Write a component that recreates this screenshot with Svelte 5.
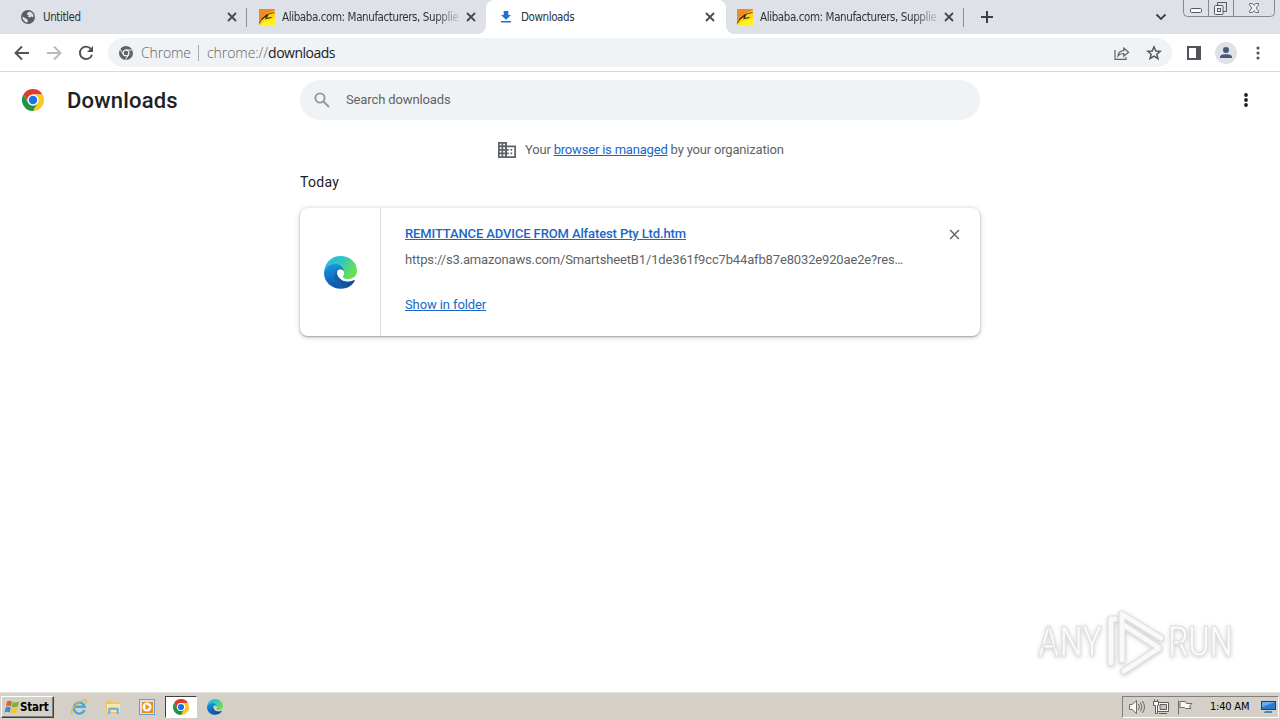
<script>
  const tabs = [
    { title: 'Untitled', icon: 'globe' },
    { title: 'Alibaba.com: Manufacturers, Supplie', icon: 'alibaba' },
    { title: 'Downloads', icon: 'download', active: true },
    { title: 'Alibaba.com: Manufacturers, Supplie', icon: 'alibaba' }
  ];
</script>

{#snippet chrome(size)}
  <svg width={size} height={size} viewBox="0 0 48 48">
    <circle cx="24" cy="24" r="24" fill="#fff" />
    <path d="M3.2 12A24 24 0 0 1 44.8 12L24 12A12 12 0 0 0 13.6 30Z" fill="#df3b30" />
    <path d="M44.8 12A24 24 0 0 1 24 48L34.4 30A12 12 0 0 0 24 12Z" fill="#fcc924" />
    <path d="M24 48A24 24 0 0 1 3.2 12L13.6 30A12 12 0 0 0 34.4 30Z" fill="#229342" />
    <circle cx="24" cy="24" r="12" fill="#fff" />
    <circle cx="24" cy="24" r="9.3" fill="#1a73e8" />
  </svg>
{/snippet}

{#snippet edge(size, id, gap)}
  <svg width={size} height={size} viewBox="0 0 256 256">
    <defs>
      <linearGradient id="{id}a" x1="0" y1="0" x2="1" y2="0.5"><stop offset="0" stop-color="#2cb4e8" /><stop offset=".5" stop-color="#2fc7c4" /><stop offset="1" stop-color="#6be050" /></linearGradient>
      <linearGradient id="{id}b" x1="0" y1="0" x2="0.3" y2="1"><stop offset="0" stop-color="#1b9de2" /><stop offset="1" stop-color="#0d55ac" /></linearGradient>
      <linearGradient id="{id}c" x1="0" y1="0" x2="1" y2="0"><stop offset="0" stop-color="#1263b5" /><stop offset="1" stop-color="#0c468c" /></linearGradient>
    </defs>
    <path d="M2 116C10 48 60 0 128 0C204 0 256 54 256 112C256 154 222 180 187 180C157 180 146 169 146 161C146 154 156 150 156 133C156 104 128 88 98 88C48 88 14 116 2 150Z" fill="url(#{id}a)" />
    <path d="M0 132C8 84 50 62 90 62C130 62 156 94 156 133C154 111 139 103 124 107C98 114 88 142 94 174C102 224 140 252 166 249C80 272 0 212 0 132Z" fill="url(#{id}b)" />
    <path d="M105 112C68 140 72 208 112 240C160 264 211 241 238 193C243 184 236 184 230 187C180 207 120 188 105 145Z" fill="url(#{id}c)" />
    <path d="M104 116C114 98 152 98 156 131C156 147 145 152 146 161C150 178 170 181 190 180C218 179 238 167 250 148L246 188L237 190C237 184 234 184 228 188C190 206 140 200 114 162C102 144 98 126 104 116Z" fill={gap} />
  </svg>
{/snippet}

{#snippet cross(size, weight)}
  <svg width={size} height={size} viewBox="0 0 10 10" fill="none" stroke="currentColor" stroke-width={weight}><path d="M1 1L9 9M9 1L1 9" /></svg>
{/snippet}

<div class="screen">
  <header class="strip">
    {#each tabs as tab, i}
      <div class="tab" class:active={tab.active} class:sep={i === 0 || i === 3}>
        <span class="fav">
          {#if tab.icon === 'globe'}
            <svg width="14" height="14" viewBox="0 0 14 14"><circle cx="7" cy="7" r="7" fill="#5a5e64" /><path d="M1.4 6.4L5 8.4C6.5 9 6 10 7 10.3L6.5 12.5C3.8 12.3 1.5 10 1.4 6.4ZM6 3.2L8.3 1.5C11 2.2 12.7 4.5 12.6 7.2L10.4 6.4L9 7.6L6.6 6.4L7.9 5.4L6.1 4.6Z" fill="#dee1e8" /></svg>
          {:else if tab.icon === 'alibaba'}
            <svg width="16" height="16" viewBox="0 0 16 16"><path fill="#ffd21c" d="M0 0h16v16H0z" /><path d="M0 0H16V1.500C10 3 4 6 0 13Z" fill="#f08a28" /><path d="M4 13L16 9V16H2Z" fill="#fff21a" /><path d="M0 14.500C2.500 9 7 4.500 15.500 3.500" fill="none" stroke="#8a4a10" stroke-width="1.100" /><path d="M2.500 10.500L8.800 5.500L7 9.500L12.500 8.500" fill="none" stroke="#3d2a10" stroke-width="1.200" /></svg>
          {:else}
            <svg width="12" height="14" viewBox="0 0 12 14" fill="#1a73d8"><path d="M3.7 1H8.3V5H11L6 9.7L1 5H3.7ZM1 11H11V12.5H1Z" /></svg>
          {/if}
        </span>
        <span class="title" class:fade={tab.icon === 'alibaba'}>{tab.title}</span>
        <span class="close">{@render cross(10, 1.8)}</span>
      </div>
    {/each}
    <svg class="plus" width="12" height="12" viewBox="0 0 12 12" stroke="#3c4043" stroke-width="2"><path d="M6 0V12M0 6H12" /></svg>
    <svg class="chev" width="12" height="8" viewBox="0 0 12 8" fill="none" stroke="#3c4043" stroke-width="1.8"><path d="M1.5 1.5L6 6L10.5 1.5" /></svg>
    <svg class="win" width="94" height="18" viewBox="0 0 94 18" fill="none" stroke="#85888f">
      <path d="M1.5 0V12.5Q1.5 16.5 5.5 16.5H88.5Q92.5 16.5 92.5 12.5V0M26.5 0V16.5M51.5 0V16.5" />
      <rect x="8.5" y="8.500" width="11" height="4" rx="1" stroke="#555960" fill="#f8f9fb" />
      <path d="M35.500 6V2.500H44.500V11.500H41" stroke="#555960" />
      <rect x="32.500" y="5.500" width="8.500" height="9" rx="1" stroke="#555960" fill="#f0f2f5" /><rect x="35.500" y="8.500" width="3" height="3" stroke="#555960" />
      <path d="M67.500 3.500H70.500L72 5.500L73.500 3.500H76.500V5L74 8L76.500 11V12.500H73.500L72 10.500L70.500 12.500H67.500V11L70 8L67.500 5Z" stroke="#6a6e75" fill="#f4f5f8" />
    </svg>
  </header>

  <nav class="toolbar">
    <svg class="nav" width="16" height="16" viewBox="0 0 16 16" fill="none" stroke="#505357" stroke-width="1.9"><path d="M15 8H2M8 1.500L1.500 8L8 14.500" /></svg>
    <svg class="nav" width="16" height="16" viewBox="0 0 16 16" fill="none" stroke="#b8babd" stroke-width="1.9"><path d="M1 8H14M8 1.500L14.500 8L8 14.500" /></svg>
    <svg class="nav" width="16" height="16" viewBox="0 0 16 16" fill="none" stroke="#505357" stroke-width="1.9"><path d="M13.200 4.300A6.200 6.200 0 1 0 14 9.800" /><path d="M15 1V7H9Z" fill="#505357" stroke="none" /></svg>
    <div class="omni">
      <svg width="14" height="14" viewBox="0 0 14 14"><circle cx="7" cy="7" r="7" fill="#5f6368" /><circle cx="7" cy="7" r="2.900" fill="none" stroke="#f0f3f6" stroke-width="1.200" /><path d="M7 4H13.500M9.600 8.500L6.600 13.800M4.400 8.500L1 3" stroke="#f0f3f6" stroke-width="1" /></svg>
      <span class="chip">Chrome</span>
      <span class="url">chrome://<b>downloads</b></span>
      <svg class="share" width="16" height="16" viewBox="0 0 16 16" fill="none" stroke="#5f6368" stroke-width="1.200"><path d="M1 5V14.400H12V12" /><path d="M4 11C4.500 7.500 6.500 5.800 9.800 5.700V3L14.600 7.200L9.800 11.200V8.500C7 8.500 5.300 9.300 4 11Z" /></svg>
      <svg width="16" height="16" viewBox="0 0 16 16" fill="none" stroke="#505357" stroke-width="1.400"><path d="M8 1.800L9.800 6L14.300 6.300L10.800 9.200L12 13.700L8 11.200L4 13.700L5.200 9.200L1.700 6.300L6.200 6Z" /></svg>
    </div>
    <svg class="panel" width="14" height="14" viewBox="0 0 14 14"><path fill-rule="evenodd" d="M0 0H14V14H0ZM2 2V12H9V2Z" fill="#505357" /></svg>
    <svg class="user" width="22" height="22" viewBox="0 0 22 22"><circle cx="11" cy="11" r="11" fill="#dee1e6" /><circle cx="11" cy="8" r="3" fill="#49577a" /><path d="M5 16V14.700C5 11.400 17 11.400 17 14.700V16Z" fill="#49577a" /></svg>
    <svg class="more" width="4" height="14" viewBox="0 0 4 14" fill="#505357"><circle cx="2" cy="2" r="1.550" /><circle cx="2" cy="7" r="1.550" /><circle cx="2" cy="12" r="1.550" /></svg>
  </nav>

  <main>
    <div class="head">
      <div class="brand">{@render chrome(22)}<h1>Downloads</h1></div>
      <div class="search">
        <svg width="16" height="16" viewBox="0 0 16 16" fill="none" stroke="#94979b" stroke-width="1.900"><circle cx="6" cy="6" r="4.600" /><path d="M9.500 9.500L15 15" /></svg>
        <span>Search downloads</span>
      </div>
      <svg class="menu" width="4" height="14" viewBox="0 0 4 14" fill="#202124"><circle cx="2" cy="2" r="1.900" /><circle cx="2" cy="7" r="1.900" /><circle cx="2" cy="12" r="1.900" /></svg>
    </div>
    <div class="managed">
      <svg width="18" height="16" viewBox="0 0 18 16"><path fill-rule="evenodd" fill="#5f6368" d="M0 0H9V3.500H18V16H0ZM1.700 1.700V3.300H3.500V1.700ZM5.200 1.700V3.300H7V1.700ZM1.700 5.200V6.900H3.500V5.200ZM5.200 5.200V6.900H7V5.200ZM1.700 8.700V10.400H3.500V8.700ZM5.200 8.700V10.400H7V8.700ZM1.700 12.200V14.200H3.500V12.200ZM5.200 12.200V14.200H7V12.200ZM9 5.200V7H10.700V8.700H9V10.400H10.700V12.200H9V14.200H16.300V5.200ZM12.400 7H14.200V8.700H12.400ZM12.400 10.400H14.200V12.200H12.400Z" /></svg>
      <span>Your <u>browser is managed</u> by your organization</span>
    </div>
    <h2>Today</h2>
    <article>
      <div class="file">{@render edge(33, 'e', '#fff')}</div>
      <div class="info">
        <div class="name"><u>REMITTANCE ADVICE FROM Alfatest Pty Ltd.htm</u>{@render cross(11, 1.300)}</div>
        <div class="src">https://s3.amazonaws.com/SmartsheetB1/1de361f9cc7b44afb87e8032e920ae2e?res…</div>
        <div class="show"><u>Show in folder</u></div>
      </div>
    </article>
  </main>

  <svg class="mark" width="230" height="72" viewBox="0 0 230 72">
    <g font-family="Roboto" font-size="43" fill="#fbfbfb" stroke="#e0e0e0" stroke-width="1">
      <text x="6" y="50" textLength="64" lengthAdjust="spacingAndGlyphs">ANY</text>
      <text x="136" y="50" textLength="65" lengthAdjust="spacingAndGlyphs">RUN</text>
    </g>
    <g fill="none" stroke-linejoin="round" stroke-linecap="round">
      <path d="M90 54V8L129 32M79 57V13H83M90 18L127 42L92 65" stroke="#e0e0e0" stroke-width="7" />
      <path d="M90 54V8L129 32M79 57V13H83M90 18L127 42L92 65" stroke="#f9f9f9" stroke-width="4.800" />
    </g>
  </svg>

  <footer>
    <div class="start">
      <svg width="16" height="16" viewBox="0 0 16 16"><path d="M3 2.500Q5.500 1 8 2.500L7 7.500Q4.500 6 2 7.500Z" fill="#e8622a" /><path d="M8.800 3Q12 4 15 2.500L13.800 7.500Q11 9 7.800 7.800Z" fill="#73b43c" /><path d="M1.700 8.500Q4.300 7 6.800 8.500L5.700 13.500Q3 12 .5 13.500Z" fill="#4189d8" /><path d="M7.600 9Q10.700 10 13.500 8.700L12.300 13.700Q9.500 15 6.500 13.900Z" fill="#f5c52b" /></svg>
      <b>Start</b>
    </div>
    <span class="app"><svg width="18" height="18" viewBox="0 0 18 18" fill="none"><path d="M14.500 12A5.500 5.500 0 1 1 14.700 8.800H5" stroke="#48a9dd" stroke-width="2.400" /><path d="M2.500 16C-1 14 6 5 12 2.500C17 .5 17 3 15.500 5.500" stroke="#e3b53c" stroke-width="1.300" /></svg></span>
    <span class="app"><svg width="18" height="18" viewBox="0 0 18 18"><path d="M2 4L3 2.500H7L8 4H15V15H2Z" fill="#e8c866" /><path d="M3 6H16V14H3Z" fill="#f8e8a8" /><path d="M4 16V11Q4 9.500 6 9.500H13Q15 9.500 15 11V16H12.500V12H6.500V16Z" fill="#79b4dc" /></svg></span>
    <span class="app"><svg width="16" height="16" viewBox="0 0 16 16"><path fill="#6f9ec4" d="M0 0H16V16H0Z" /><path fill="#cfe3f2" d="M1 1H15V15H1Z" /><path fill="#f08a1b" d="M3 3H14V14H3Z" /><circle cx="8" cy="8" r="4.500" fill="#fff" /><path d="M6.500 5L11 8L6.500 11Z" fill="#f38b18" /></svg></span>
    <span class="app current">{@render chrome(16)}</span>
    <span class="app">{@render edge(16, 's', '#d4d0c8')}</span>
    <div class="tray">
      <svg width="18" height="16" viewBox="0 0 18 16" fill="#f8f8f6" stroke="#6d6c69"><path d="M1.500 5.500H4L8.500 1.500V14.500L4 10.500H1.500Z" /><path d="M10.500 5Q12.500 8 10.500 11M12.500 3.500Q15.500 8 12.500 12.500M14.500 2Q18.500 8 14.500 14" fill="none" /></svg>
      <svg width="18" height="16" viewBox="0 0 18 16" fill="#f8f8f6" stroke="#5f5e5b"><path d="M5.500 3.500H16.500V12.500H5.500ZM7 14.500H15" /><path d="M8 5.500H14.500V10.500H8Z" fill="#c4c3bf" /><path d="M2.500 .5V3M5.500 .5V3M1.500 2.500H6.500V6.500H5.500V14.500H3.500V6.500H1.500Z" /></svg>
      <svg width="18" height="16" viewBox="0 0 18 16" fill="#f8f8f6" stroke="#6d6c69"><path d="M2.500 1.500V15.500M4 2.500H9.500L10.500 4.500H16L13.500 7L15 9.500H9.500L8.500 8.500H4Z" /></svg>
      <time>1:40 AM</time>
      <svg width="16" height="14" viewBox="0 0 16 14"><path fill="#1b3f78" d="M0 1H15V10H0Z" /><path fill="#2c7bd1" d="M1 2H14V9H1Z" /><path fill="#69a9e9" d="M1 2H14L1 7Z" /><path d="M4 11H11V13H3Z" fill="#5684b0" /></svg>
    </div>
  </footer>
</div>

<style>
  :global(body) { margin: 0; background: #fff; }
  * { box-sizing: border-box; }
  svg { flex: none; display: block; }
  .screen { width: 1280px; height: 720px; overflow: hidden; display: flex; flex-direction: column; position: relative; background: #fff; font-family: Roboto, sans-serif; color: #202124; }
  .strip { height: 34px; flex: none; background: #dee1e8; display: flex; padding-left: 8px; }
  .tab { width: 239px; height: 34px; display: flex; align-items: center; padding: 0 10px 0 12px; color: #303338; position: relative; }
  .tab.sep::after { content: ''; position: absolute; right: 0; top: 8px; width: 1px; height: 19px; background: #8b8e94; }
  .tab.active { width: 240px; margin-right: -1px; padding-right: 11px; background: #fff; border-radius: 8px 8px 0 0; }
  .tab.active::before, .tab.active::after { content: ''; position: absolute; width: 8px; height: 8px; bottom: 0; z-index: 1; }
  .tab.active::before { left: -8px; background: radial-gradient(circle at 0 0, transparent 7.500px, #fff 8px); }
  .tab.active::after { right: -8px; background: radial-gradient(circle at 100% 0, transparent 7.500px, #fff 8px); }
  .fav { width: 16px; height: 16px; display: grid; place-items: center; }
  .title { flex: 0 0 180px; margin-left: 7px; white-space: nowrap; font: 11.500px/18px 'DejaVu Sans Condensed', 'DejaVu Sans', sans-serif; font-stretch: condensed; letter-spacing: -.4px; }
  .fade { mask-image: linear-gradient(90deg, #000 152px, transparent 182px); }
  .close { margin-left: auto; color: #45494e; }
  .plus { margin: 11px 0 0 17px; }
  .chev { margin: 13px 16px 0 auto; position: relative; left: 1px; }
  .win { margin-right: 4px; }
  .toolbar { height: 38px; flex: none; display: flex; align-items: center; border-bottom: 1px solid #d7d8da; padding: 0 20px 0 14px; }
  .nav { margin-right: 16px; }
  .nav:nth-of-type(3) { margin-right: 14px; }
  .omni { width: 1064px; height: 29px; border-radius: 15px; background: #f0f3f5; display: flex; align-items: center; padding: 0 10px 0 11px; font: 14px/20px 'Open Sans', sans-serif; font-weight: 300; color: #5f6368; }
  .chip { width: 58px; border-right: 1px solid #a7aaae; line-height: 16px; margin: 0 8px; letter-spacing: -.15px; }
  .url { letter-spacing: -.05px; }
  .url b { font-weight: 400; color: #202124; letter-spacing: -.5px; }
  .share { margin: 0 16px 0 auto; }
  .panel { margin-left: 15px; }
  .user { margin-left: 14px; }
  .more { margin-left: auto; }
  main { flex: 1; }
  .head { height: 56px; display: flex; align-items: center; padding-right: 32px; }
  .brand { width: 300px; display: flex; align-items: center; padding-left: 22px; gap: 23px; }
  h1 { margin: 2px 0 0; font-size: 22px; line-height: 30px; font-weight: 500; letter-spacing: .2px; }
  .search { width: 680px; height: 40px; border-radius: 20px; background: #f0f3f5; display: flex; align-items: center; gap: 16px; padding-left: 14px; font-size: 13px; color: #5f6368; letter-spacing: -.12px; }
  .search span, .managed span { padding-bottom: 2px; }
  .menu { margin-left: auto; }
  .managed { display: flex; align-items: center; height: 44px; padding-left: 498px; gap: 9px; font-size: 13px; color: #5f6368; letter-spacing: -.19px; }
  u { color: #1967c8; }
  h2 { margin: 0 0 15px 300px; font-size: 14px; line-height: 21px; font-weight: 400; letter-spacing: .3px; }
  article { margin-left: 300px; width: 680px; height: 128px; border-radius: 8px; display: flex; box-shadow: 0 1px 2px rgba(60,64,67,.4), 0 1px 5px 1px rgba(60,64,67,.18); font-size: 13px; color: #5f6368; }
  .file { width: 81px; border-right: 1px solid #d9dadd; display: grid; place-items: center; }
  .info { flex: 1; padding: 17px 20px 0 24px; line-height: 18px; }
  .name { display: flex; justify-content: space-between; align-items: center; font-weight: 500; letter-spacing: -.12px; }
  .src { margin-top: 8px; white-space: nowrap; letter-spacing: -.15px; }
  .show { margin-top: 27px; letter-spacing: -.11px; }
  .mark { position: absolute; left: 1032px; top: 606px; filter: drop-shadow(0 1px 2px #ccc); }
  footer { height: 28px; flex: none; background: #d4d0c8; border-top: 1px solid #e7e5df; display: flex; align-items: center; padding: 0 1px 0; }
  .start { width: 53px; height: 22px; display: flex; align-items: center; gap: 0; padding-left: 2px; border: 1px solid; border-color: #fff #404040 #404040 #fff; box-shadow: inset -1px -1px #808080; color: #000; font: 11.500px/16px 'DejaVu Sans Condensed', sans-serif; letter-spacing: -.2px; margin-right: 8px; }
  .app { width: 34px; height: 22px; display: grid; place-items: center; }
  .current { width: 32px; margin: 0 1px; background: #fff; border: 1px solid; border-color: #404040 #fff #fff #404040; }
  .tray { margin-left: auto; width: 157px; height: 22px; border: 1px solid; border-color: #808080 #fff #fff #808080; display: flex; align-items: center; padding-left: 5px; gap: 6px; }
  time { width: 42px; margin: 0 3px 0 10px; white-space: nowrap; color: #000; font: 11px/16px 'DejaVu Sans Condensed', sans-serif; letter-spacing: -.2px; }
</style>
